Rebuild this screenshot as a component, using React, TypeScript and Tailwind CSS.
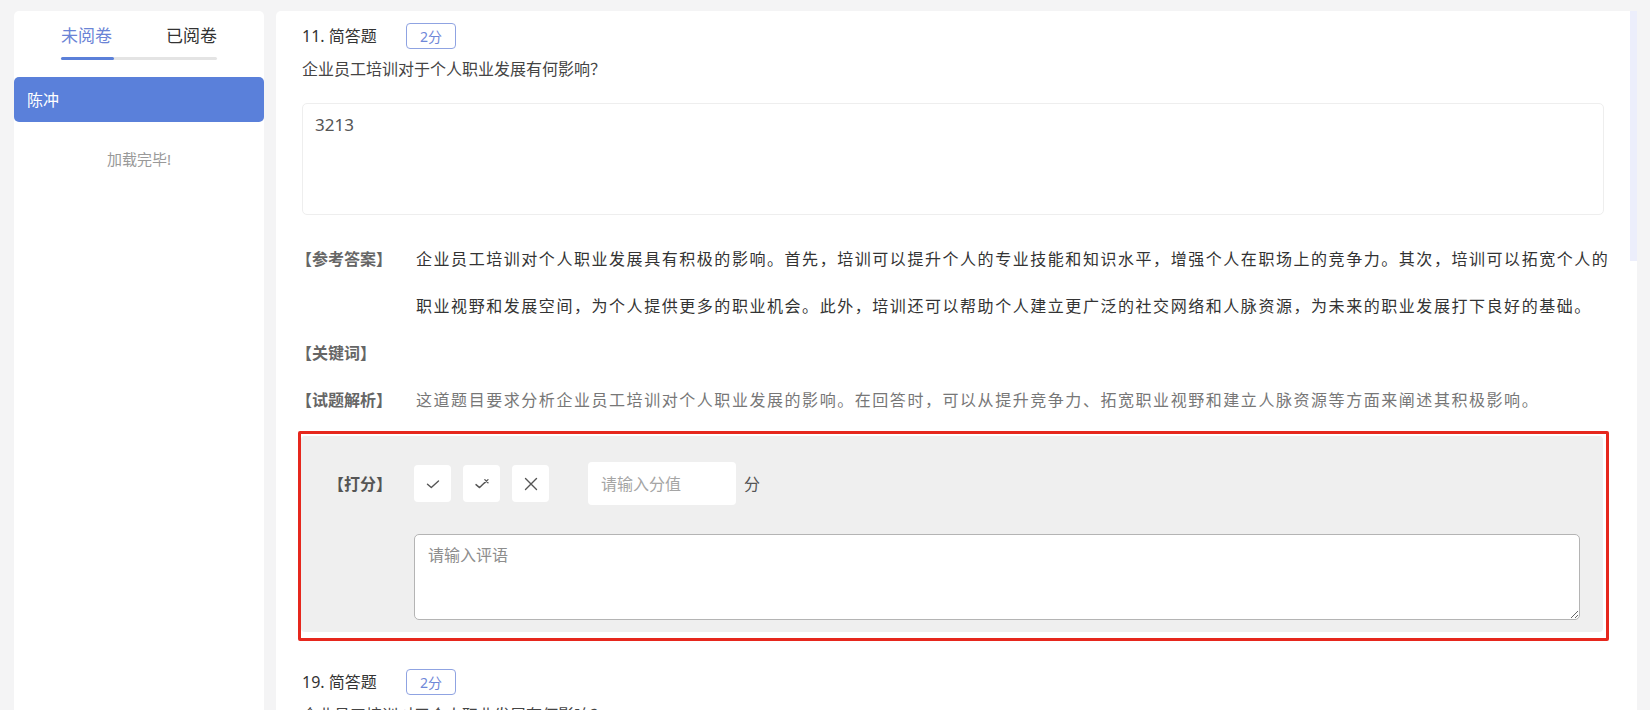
import { JSX } from 'react';

const font = "font-['Noto_Sans','Noto_Sans_CJK_SC',sans-serif]";

function CheckIcon() {
  return (
    <svg width="16" height="16" viewBox="0 0 16 16" fill="none">
      <path d="M2.5 8.2 L6.3 11.5 L13.5 5" stroke="#555" strokeWidth="1.4" strokeLinecap="round" strokeLinejoin="round" />
    </svg>
  );
}

function HalfIcon() {
  return (
    <svg width="16" height="16" viewBox="0 0 16 16" fill="none">
      <path d="M2 8.6 L5.6 11.6 L10.5 6.8" stroke="#555" strokeWidth="1.4" strokeLinecap="round" strokeLinejoin="round" />
      <path d="M10.8 3.6 L14 6.8 M14 3.6 L10.8 6.8" stroke="#555" strokeWidth="1.3" strokeLinecap="round" />
    </svg>
  );
}

function CrossIcon() {
  return (
    <svg width="16" height="16" viewBox="0 0 16 16" fill="none">
      <path d="M2.5 2.5 L13.5 13.5 M13.5 2.5 L2.5 13.5" stroke="#555" strokeWidth="1.4" strokeLinecap="round" />
    </svg>
  );
}

function QuestionHead({ no }: { no: string }): JSX.Element {
  return (
    <div className="flex items-center h-[26px]">
      <span className="text-[16px] text-[#333] w-[104px]">{no}. 简答题</span>
      <span className="w-[50px] h-[26px] flex items-center justify-center border border-[#8fa3e2] rounded-[4px] text-[14px] text-[#6f87d8]">
        2分
      </span>
    </div>
  );
}

export default function App(): JSX.Element {
  const tabs = ['未阅卷', '已阅卷'];

  return (
    <div className={`${font} w-[1650px] h-[710px] overflow-hidden bg-[#f4f4f5] flex gap-[12px] pl-[14px] pt-[11px]`}>
      {/* 左侧名单 */}
      <aside className="w-[250px] h-[720px] bg-white rounded-t-[5px] shrink-0">
        <div className="w-[156px] mx-auto pt-[12px]">
          <div className="flex justify-between text-[17px] leading-[26px]">
            {tabs.map((t, i) => (
              <span key={t} className={i === 0 ? 'text-[#6b84d6]' : 'text-[#333]'}>
                {t}
              </span>
            ))}
          </div>
          <div className="mt-[8px] h-[3px] bg-[#e4e4e4] rounded-full">
            <div className="w-[53px] h-[3px] bg-[#5b80d9] rounded-full" />
          </div>
        </div>
        <div className="mt-[17px] h-[45px] bg-[#5a80da] rounded-[5px] flex items-center pl-[13px] text-[16px] text-white">
          陈冲
        </div>
        <div className="mt-[26px] text-center text-[15px] text-[#999]">加载完毕!</div>
      </aside>

      {/* 右侧答题 */}
      <main className="relative w-[1361px] h-[720px] bg-white rounded-t-[5px] pl-[26px] pr-[33px] pt-[12px]">
        <div className="absolute right-0 top-0 w-[7px] h-[250px] bg-[#eceefb]" />

        <QuestionHead no="11" />
        <p className="mt-[8px] text-[16px] leading-[24px] text-[#444]">企业员工培训对于个人职业发展有何影响？</p>
        <div className="mt-[22px] h-[112px] border border-[#eeeeee] rounded-[5px] px-[12px] pt-[8px] text-[17px] text-[#555]">
          3213
        </div>

        <div className="mt-[21px] text-[16px] leading-[47px]">
          <div className="flex">
            <span className="w-[114px] shrink-0 -ml-[6px] mr-[6px] font-bold text-[#666]">【参考答案】</span>
            <p className="w-[1198px] shrink-0 tracking-[1.55px] text-[#333]">
              企业员工培训对个人职业发展具有积极的影响。首先，培训可以提升个人的专业技能和知识水平，增强个人在职场上的竞争力。其次，培训可以拓宽个人的职业视野和发展空间，为个人提供更多的职业机会。此外，培训还可以帮助个人建立更广泛的社交网络和人脉资源，为未来的职业发展打下良好的基础。
            </p>
          </div>
          <div className="flex">
            <span className="w-[114px] shrink-0 -ml-[6px] font-bold text-[#666]">【关键词】</span>
          </div>
          <div className="flex">
            <span className="w-[114px] shrink-0 -ml-[6px] mr-[6px] font-bold text-[#666]">【试题解析】</span>
            <p className="w-[1198px] shrink-0 tracking-[1.55px] text-[#777]">
              这道题目要求分析企业员工培训对个人职业发展的影响。在回答时，可以从提升竞争力、拓宽职业视野和建立人脉资源等方面来阐述其积极影响。
            </p>
          </div>
        </div>

        {/* 打分区域 */}
        <div className="mt-[7px] -ml-[4px] -mr-[5px] border-[3px] border-[#e6271d] rounded-[2px] bg-white pt-[2px] pr-[3px] pb-[6px]">
          <div className="bg-[#efefef] rounded-[4px] pl-[27px] pr-[23px] pt-[26px] pb-[12px]">
            <div className="flex items-center h-[43px]">
              <span className="w-[86px] text-[16px] font-bold text-[#555]">【打分】</span>
              <div className="flex gap-[12px]">
                <button className="w-[37px] h-[37px] bg-white rounded-[4px] flex items-center justify-center">
                  <CheckIcon />
                </button>
                <button className="w-[37px] h-[37px] bg-white rounded-[4px] flex items-center justify-center">
                  <HalfIcon />
                </button>
                <button className="w-[37px] h-[37px] bg-white rounded-[4px] flex items-center justify-center">
                  <CrossIcon />
                </button>
              </div>
              <input
                className="ml-[39px] w-[148px] h-[43px] bg-white rounded-[4px] pl-[13px] text-[16px] outline-none placeholder:text-[#a5a5a5]"
                placeholder="请输入分值"
              />
              <span className="ml-[8px] text-[16px] text-[#555]">分</span>
            </div>
            <div className="mt-[29px] pl-[86px]">
              <textarea
                className="block w-full h-[86px] bg-white border border-[#b4b4b4] rounded-[5px] px-[13px] py-[8px] text-[16px] outline-none placeholder:text-[#8d8d8d]"
                placeholder="请输入评语"
              />
            </div>
          </div>
        </div>

        <div className="mt-[28px]">
          <QuestionHead no="19" />
          <p className="mt-[8px] text-[16px] leading-[24px] text-[#444]">企业员工培训对于个人职业发展有何影响？</p>
        </div>
      </main>
    </div>
  );
}
